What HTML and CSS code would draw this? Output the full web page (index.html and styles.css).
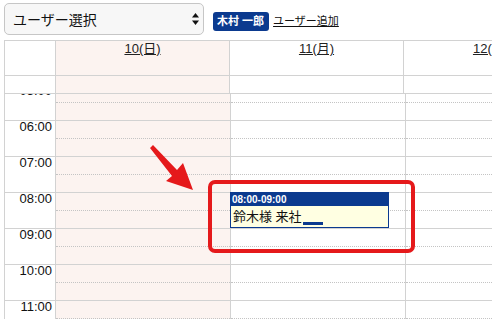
FILE: index.html
```html
<!DOCTYPE html>
<html lang="ja">
<head>
    <meta charset="UTF-8">
    <meta name="viewport" content="width=device-width, initial-scale=1.0">
    <title>スケジュール</title>
    <link rel="stylesheet" href="styles.css">
</head>
<body>
    <div class="page">
        <div class="toolbar">
            <div class="user-select">
                <span>ユーザー選択</span>
                <svg class="select-arrows" width="7" height="12" viewBox="0 0 7 12">
                    <path d="M3.5 0 L7 4.5 L0 4.5 Z" fill="#111"/>
                    <path d="M0 7.5 L7 7.5 L3.5 12 Z" fill="#111"/>
                </svg>
            </div>
            <span class="badge">木村 一郎</span>
            <a href="#" class="add-user">ユーザー追加</a>
        </div>

        <div class="calendar">
            <div class="cal-head">
                <div class="head-cell time-cell"></div>
                <div class="head-cell sunday"><a href="#">10(日)</a></div>
                <div class="head-cell"><a href="#">11(月)</a></div>
                <div class="head-cell"><a href="#">12(火)</a></div>
                <div class="allday-cell time-cell"></div>
                <div class="allday-cell sunday"></div>
                <div class="allday-cell"></div>
                <div class="allday-cell"></div>
            </div>

            <div class="cal-body">
                <div class="cal-scroll">
                    <div class="times">
                        <div class="hour"><span>05:00</span></div>
                        <div class="hour"><span>06:00</span></div>
                        <div class="hour"><span>07:00</span></div>
                        <div class="hour"><span>08:00</span></div>
                        <div class="hour"><span>09:00</span></div>
                        <div class="hour"><span>10:00</span></div>
                        <div class="hour"><span>11:00</span></div>
                    </div>
                    <div class="day sunday">
                        <div class="slot"></div><div class="slot half"></div>
                        <div class="slot"></div><div class="slot half"></div>
                        <div class="slot"></div><div class="slot half"></div>
                        <div class="slot"></div><div class="slot half"></div>
                        <div class="slot"></div><div class="slot half"></div>
                        <div class="slot"></div><div class="slot half"></div>
                        <div class="slot"></div><div class="slot half"></div>
                    </div>
                    <div class="day">
                        <div class="slot"></div><div class="slot half"></div>
                        <div class="slot"></div><div class="slot half"></div>
                        <div class="slot"></div><div class="slot half"></div>
                        <div class="slot"></div><div class="slot half"></div>
                        <div class="slot"></div><div class="slot half"></div>
                        <div class="slot"></div><div class="slot half"></div>
                        <div class="slot"></div><div class="slot half"></div>
                        <div class="event">
                            <div class="event-time">08:00-09:00</div>
                            <div class="event-title">鈴木様 来社<span class="event-handle"></span></div>
                        </div>
                    </div>
                    <div class="day">
                        <div class="slot"></div><div class="slot half"></div>
                        <div class="slot"></div><div class="slot half"></div>
                        <div class="slot"></div><div class="slot half"></div>
                        <div class="slot"></div><div class="slot half"></div>
                        <div class="slot"></div><div class="slot half"></div>
                        <div class="slot"></div><div class="slot half"></div>
                        <div class="slot"></div><div class="slot half"></div>
                    </div>
                </div>
            </div>
        </div>

        <!-- annotation -->
        <div class="highlight"></div>
        <svg class="pointer" width="55" height="55" viewBox="145 140 55 55">
            <polygon points="153,145 177,170 183,163 193,190 166,181 172,176 150,148" fill="#e5191b"/>
        </svg>
    </div>
</body>
</html>
```

FILE: styles.css
```css
html, body {
    margin: 0;
    padding: 0;
    height: 319px;
    overflow: hidden;
    background-color: #fff;
}
body {
    font-family: "Liberation Sans", "Noto Sans CJK JP", sans-serif;
    color: #111;
}
.page {
    position: relative;
    padding: 3px 0 0 4px;
}

/* toolbar */
.toolbar {
    display: flex;
    align-items: flex-start;
}
.user-select {
    box-sizing: border-box;
    width: 200px;
    height: 32px;
    display: flex;
    align-items: center;
    justify-content: space-between;
    padding: 0 4px 0 8px;
    border: 1px solid #c6c6c6;
    border-radius: 5px;
    background-color: #f7f7f7;
    font-size: 14px;
}
.select-arrows {
    display: block;
}
.badge {
    margin: 9px 0 0 9px;
    padding: 0 5px 0 4px;
    line-height: 19px;
    font-size: 11px;
    font-weight: bold;
    color: #fff;
    background-color: #0b3a8f;
    border-radius: 3px;
}
.add-user {
    margin: 9px 0 0 4px;
    line-height: 19px;
    font-size: 11px;
    color: #111;
}

/* calendar */
.calendar {
    margin-top: 5px;
    border-top: 1px solid #d2d2d2;
    border-left: 1px solid #d2d2d2;
    overflow: hidden;
}
.cal-head {
    display: grid;
    grid-template-columns: 51px 174px 174px 175px;
}
.head-cell, .allday-cell {
    box-sizing: border-box;
    border-right: 1px solid #d2d2d2;
    border-bottom: 1px solid #d2d2d2;
    text-align: center;
}
.head-cell {
    height: 35px;
    padding-top: 1px;
    font-size: 13px;
    line-height: 14px;
}
.head-cell a {
    color: #222;
}
.allday-cell {
    height: 18px;
}
.sunday {
    background-color: #fcf3f0;
}
.time-cell {
    background-color: #fff;
}

.cal-body {
    height: 226px;
    overflow: hidden;
}
.cal-scroll {
    display: grid;
    grid-template-columns: 51px 175px 175px 175px;
    margin-top: -10px;
}
.times, .day {
    box-sizing: border-box;
    border-right: 1px solid #d2d2d2;
}
.day {
    position: relative;
}
.hour {
    box-sizing: border-box;
    height: 36px;
    border-top: 1px solid #d2d2d2;
    text-align: right;
    padding-right: 3px;
    font-size: 13px;
    line-height: 11px;
}
.slot {
    box-sizing: border-box;
    height: 18px;
    border-top: 1px solid #d2d2d2;
}
.slot.half {
    border-top: 1px dotted #c4c4c4;
}

/* event */
.event {
    position: absolute;
    top: 108px;
    left: -1px;
    box-sizing: border-box;
    width: 159px;
    height: 36px;
    border: 1px solid #0b3a8f;
    background-color: #ffffe2;
}
.event-time {
    height: 13px;
    padding-left: 1px;
    background-color: #0b3a8f;
    color: #fff;
    font-size: 10px;
    font-weight: bold;
    line-height: 13px;
}
.event-title {
    padding: 3px 0 0 2px;
    font-size: 13px;
    line-height: 16px;
}
.event-handle {
    display: inline-block;
    width: 20px;
    height: 3px;
    margin-left: 1px;
    background-color: #0b3a8f;
    vertical-align: -4px;
}

/* annotation */
.highlight {
    position: absolute;
    left: 208px;
    top: 180px;
    box-sizing: border-box;
    width: 207px;
    height: 73px;
    border: 4px solid #e5191b;
    border-radius: 7px;
}
.pointer {
    position: absolute;
    left: 145px;
    top: 140px;
}
```
